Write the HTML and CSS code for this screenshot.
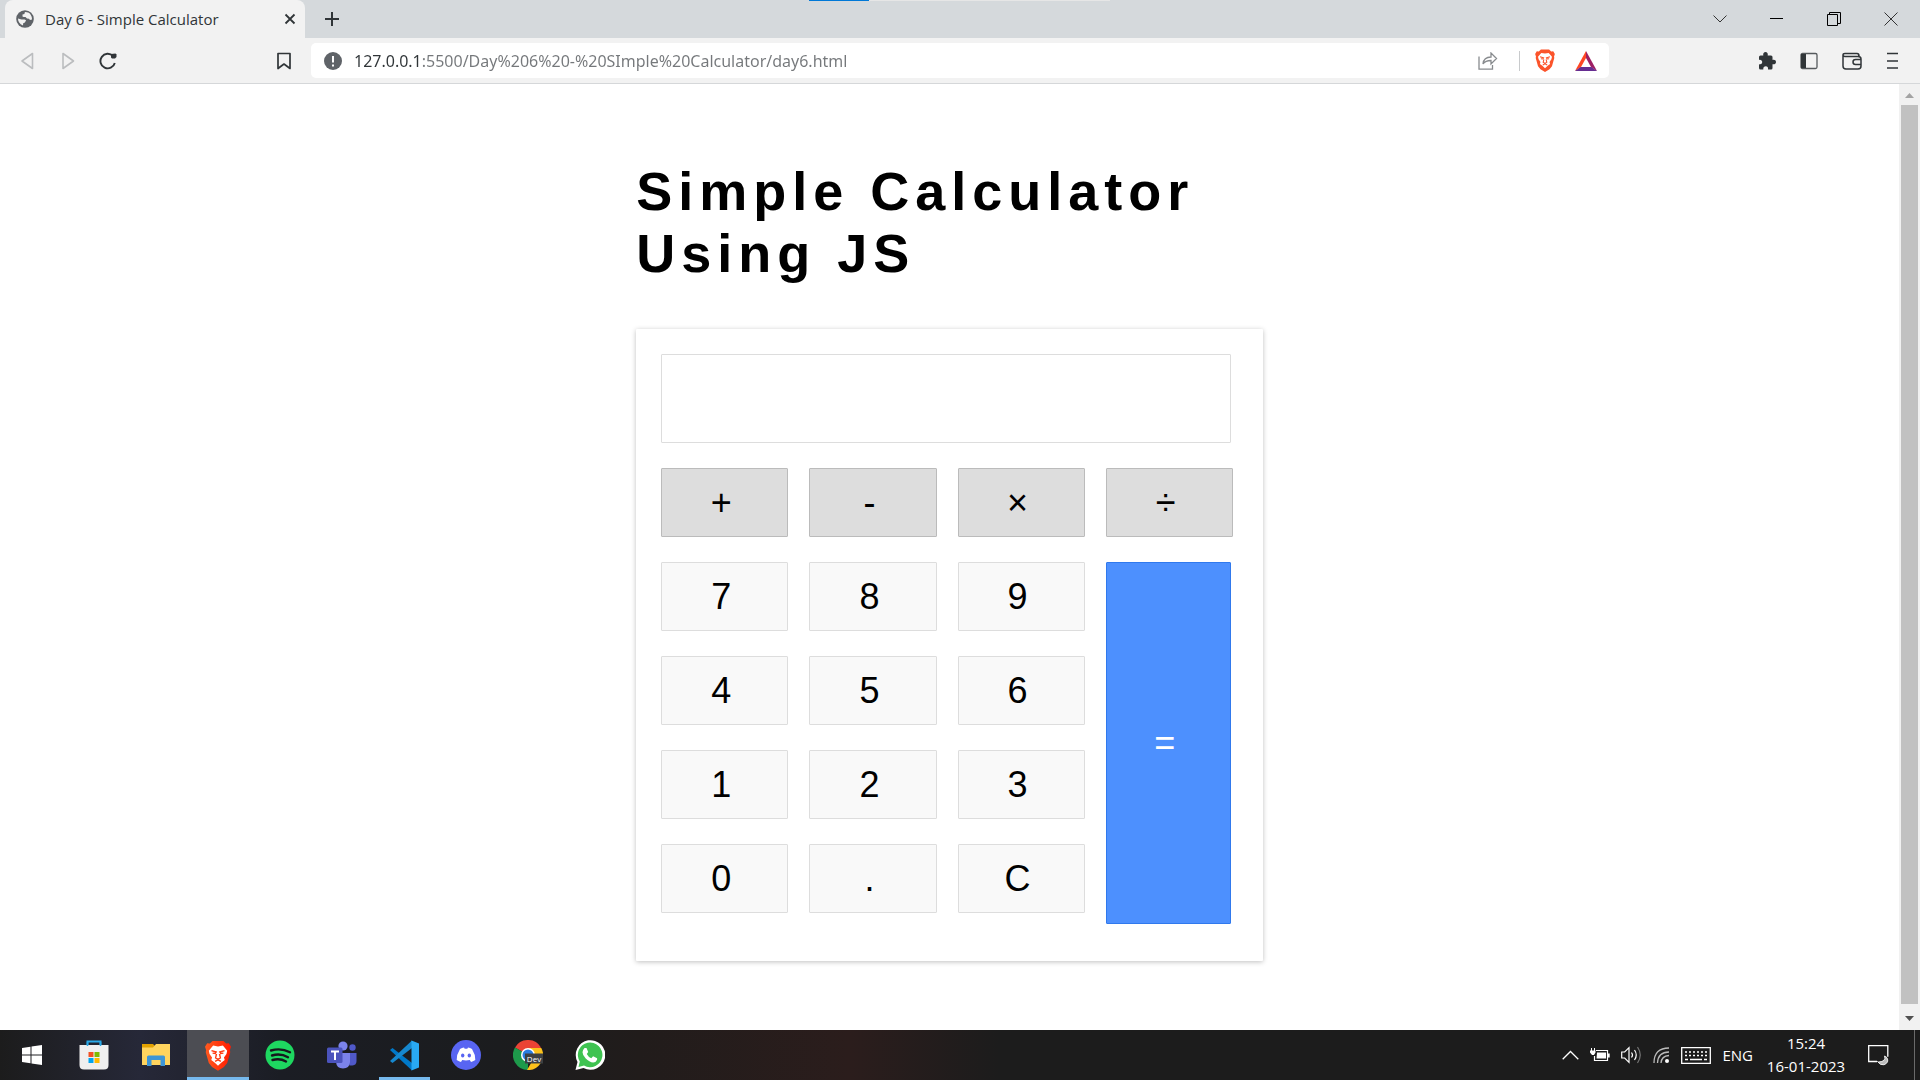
FILE: index.html
```html
<!DOCTYPE html>
<html lang="en">
<head>
<meta charset="utf-8">
<title>Day 6 - Simple Calculator</title>
<link rel="stylesheet" href="styles.css">
</head>
<body>
<svg class="defs" aria-hidden="true">
  <defs>
    <linearGradient id="braveFill" x1="0" y1="0" x2="1" y2="0"><stop offset="0" stop-color="#ff5a1f"/><stop offset="1" stop-color="#ff1a00"/></linearGradient>
    <symbol id="lion" viewBox="0 0 24 28">
      <path d="M7 .5h10l2.500 2.500 2.500-.2L24 6l-1 3 .3 2-2.800 10-3 3.500L12 28 6.500 24.500l-3-3.500L.7 11 1 9 0 6l2-3.200 2.500.2z"/>
      <path fill="#fff" d="M7.500 4.800l4.500.8 4.500-.8 4 4.700-.7 3-2.300 3.300.7 2.400-3 2.200L12 23.500l-3.200-3.100-3-2.200.7-2.400-2.300-3.300-.7-3z"/>
      <path class="lion-line" d="M6 9.500l4.300 1.300-.8 1.400-2.500-.4M18 9.500l-4.300 1.300.8 1.400 2.500-.4M10.600 12.500l-.8 3.700 2.200 1.300 2.200-1.300-.8-3.700M9.300 19.500L12 18l2.700 1.500"/>
    </symbol>
  </defs>
</svg>

<div class="tabstrip">
  <div class="tab">
    <svg class="icon18" viewBox="0 0 18 18"><circle cx="9" cy="9" r="8.800" fill="#5f6368"/><path fill="#f2f2f2" d="M9.500 2c-1 .3-1 1-1 2l-2 .6v2l1 .3 2 .1 1.500 1.500 2 .2 1 1.300 2-.4c.2-3.500-2-6.400-4-7zM2 8.500c0 3 1.500 5.500 5 6.900l.2-2.200 1.700-.6 1.200-2.300-1.600-.9H5.500z"/></svg>
    <span class="tab-title">Day 6 - Simple Calculator</span>
    <button class="plain" aria-label="Close tab"><svg width="12" height="12" viewBox="0 0 12 12"><path d="M1.500 1.500l9 9M10.500 1.500l-9 9" stroke="#303538" stroke-width="1.800"/></svg></button>
  </div>
  <button class="plain new-tab" aria-label="New tab"><svg width="16" height="16" viewBox="0 0 16 16"><path d="M8 1v14M1 8h14" stroke="#303538" stroke-width="2"/></svg></button>
  <div class="window-controls">
    <button class="plain" aria-label="Search tabs"><svg width="14" height="14" viewBox="0 0 14 14"><path d="M.5 3.500L7 10l6.500-6.500" fill="none" stroke="#333"/></svg></button>
    <button class="plain" aria-label="Minimize"><svg width="14" height="14" viewBox="0 0 14 14"><path d="M0 6.500h13" stroke="#000"/></svg></button>
    <button class="plain" aria-label="Restore"><svg width="14" height="14" viewBox="0 0 14 14"><path d="M.5 2.500h10v11H.5zM2.500 2V.5h11v11H11" fill="none" stroke="#000"/></svg></button>
    <button class="plain" aria-label="Close"><svg width="14" height="14" viewBox="0 0 14 14"><path d="M.5.5l13 13M13.500.5l-13 13" stroke="#333"/></svg></button>
  </div>
  <div class="progress"></div>
</div>

<div class="toolbar">
  <div class="nav">
    <button class="plain" aria-label="Back"><svg width="18" height="18" viewBox="0 0 18 18"><path d="M13.500 1.500v15L3 9z" fill="none" stroke="#bbbdbf" stroke-width="1.600" stroke-linejoin="round"/></svg></button>
    <button class="plain" aria-label="Forward"><svg width="18" height="18" viewBox="0 0 18 18"><path d="M4 1.500v15L14.500 9z" fill="none" stroke="#bbbdbf" stroke-width="1.600" stroke-linejoin="round"/></svg></button>
    <button class="plain" aria-label="Reload"><svg width="18" height="18" viewBox="0 0 18 18"><path d="M14 4A7.300 7.300 0 1 0 15.800 11" fill="none" stroke="#303538" stroke-width="1.900"/><path d="M12 2l4.500-.5 1 1v2.500l-1.500 1.500h-3l-1-1z" fill="#303538"/></svg></button>
    <button class="plain bookmark" aria-label="Bookmark this page"><svg width="18" height="18" viewBox="0 0 18 18"><path d="M3 1.500h12v15l-6-4.500-6 4.500z" fill="none" stroke="#303538" stroke-width="1.700" stroke-linejoin="round"/></svg></button>
  </div>
  <div class="address">
    <svg class="icon18" viewBox="0 0 18 18"><circle cx="9" cy="9" r="9" fill="#5f6368"/><path d="M9 4v6.500M9 12.500v2" stroke="#fff" stroke-width="2"/></svg>
    <input class="url" type="text" aria-label="Address" value="127.0.0.1:5500/Day%206%20-%20SImple%20Calculator/day6.html">
    <button class="plain share" aria-label="Share"><svg width="20" height="18" viewBox="0 0 20 18"><path d="M1 4.500v12.700h13.500V13M5 12c.5-5 4-7 8-7V1l5.500 5.500L13 12V8.500c-4 0-6 .5-8 3.500z" fill="none" stroke="#888b8e" stroke-width="1.300"/></svg></button>
    <span class="divider"></span>
    <button class="plain" aria-label="Brave Shields"><svg class="shield" width="20" height="23"><use href="#lion"/></svg></button>
    <button class="plain" aria-label="Brave Rewards"><svg width="22" height="20" viewBox="0 0 22 20"><path d="M11 0v7L6 16l-6 4z" fill="#ff4724"/><path d="M11 0l11 20-6-4-5-9z" fill="#9e1f63"/><path d="M0 20l5.500-4h11L22 20z" fill="#662d91"/></svg></button>
  </div>
  <div class="actions">
    <button class="plain" aria-label="Extensions"><svg width="18" height="18" viewBox="0 0 18 18"><path fill="#303538" d="M1 5a1.500 1.500 0 0 1 1.500-1.500H5.300C4.700 1.500 6 0 7.500 0s2.800 1.500 2.200 3.500H13A1.500 1.500 0 0 1 14.500 5v3C16.500 7.500 18 8.500 18 10s-1.500 2.700-3.500 2.200v3.800A1.500 1.500 0 0 1 13 17.500H10c.4-2-.7-3.200-2.200-3.200S5 15.500 5.300 17.500H2.500A1.500 1.500 0 0 1 1 16v-3.700c2 .4 3.200-.7 3.200-2.200S3 7.500 1 7.900z"/></svg></button>
    <button class="plain" aria-label="Sidebar"><svg width="18" height="18" viewBox="0 0 18 18"><rect x="1" y="1.500" width="16" height="15" rx="1.500" fill="none" stroke="#55595c" stroke-width="1.300"/><path d="M1 2h5v14H1z" fill="#303538"/></svg></button>
    <button class="plain" aria-label="Wallet"><svg width="20" height="18" viewBox="0 0 20 18"><path d="M1 3v11q0 3 3 3h12q3 0 3-3V7q0-2.500-3-2.500H3Q1 4.500 1 3t2-1.500h12q2 0 2 2.500" fill="none" stroke="#303538" stroke-width="1.500"/><path d="M19 7.500h-5.500a2.500 2.500 0 0 0 0 5H19" fill="none" stroke="#303538" stroke-width="1.500"/></svg></button>
    <button class="plain" aria-label="Menu"><svg width="12" height="18" viewBox="0 0 12 18"><path d="M1 1.500h11M1 9h11M1 16h11" stroke="#303538" stroke-width="1.500"/></svg></button>
  </div>
</div>

<div class="viewport">
  <main class="page">
    <div class="container">
      <h1>Simple Calculator Using JS</h1>
      <div class="calculator">
        <input class="display" type="text" aria-label="Result">
        <div class="keys">
          <button class="key operator">+</button>
          <button class="key operator">-</button>
          <button class="key operator">×</button>
          <button class="key operator">÷</button>
          <button class="key">7</button>
          <button class="key">8</button>
          <button class="key">9</button>
          <button class="key equals">=</button>
          <button class="key">4</button>
          <button class="key">5</button>
          <button class="key">6</button>
          <button class="key">1</button>
          <button class="key">2</button>
          <button class="key">3</button>
          <button class="key">0</button>
          <button class="key">.</button>
          <button class="key">C</button>
        </div>
      </div>
    </div>
  </main>
  <div class="scrollbar">
    <svg width="9" height="5" viewBox="0 0 9 5"><path d="M0 5l4.500-5L9 5z" fill="#a3a3a3"/></svg>
    <div class="thumb"></div>
    <svg width="9" height="5" viewBox="0 0 9 5"><path d="M0 0l4.500 5L9 0z" fill="#505050"/></svg>
  </div>
</div>

<footer class="taskbar">
  <div class="apps">
    <button class="app" aria-label="Start"><svg width="20" height="20" viewBox="0 0 20 20"><path fill="#fff" d="M0 3l8.500-1.200v7.700H0zM9.500 1.600L20 0v9.500H9.500zM0 10.500h8.500v7.700L0 17zM9.500 10.500H20V20L9.500 18.400z"/></svg></button>
    <button class="app" aria-label="Microsoft Store"><svg width="30" height="30" viewBox="0 0 30 30"><path d="M8.500 7V1.500h13V7" fill="none" stroke="#2aa9e8" stroke-width="2"/><path d="M.5 5h29v20q0 4.500-4.500 4.500H5Q.5 29.500.5 25z" fill="#efefef"/><path d="M8.500 6V2M21.500 6V2" stroke="#2aa9e8" stroke-width="1.500"/><path d="M9.500 12h5v5h-5z" fill="#f25022"/><path d="M15.500 12h5v5h-5z" fill="#7fba00"/><path d="M9.500 18h5v5h-5z" fill="#00a4ef"/><path d="M15.500 18h5v5h-5z" fill="#ffb900"/></svg></button>
    <button class="app" aria-label="File Explorer"><svg width="28" height="24" viewBox="0 0 28 24"><path d="M0 1h11l3 3-3 3H0z" fill="#e2a100"/><path d="M0 4.500h11L14 1h14v21H0z" fill="#ffd45e"/><path d="M5 23V14q0-1.500 1.500-1.500h15Q23 12.500 23 14v9h-4.500v-6h-9v6z" fill="#3d95d6"/></svg></button>
    <button class="app active" aria-label="Brave"><svg class="brave" width="26" height="31"><use href="#lion"/></svg></button>
    <button class="app" aria-label="Spotify"><svg width="30" height="30" viewBox="0 0 30 30"><circle cx="15" cy="15" r="14.500" fill="#1ed760"/><path d="M6 10.500q10-3 19 1.800M7 15.500q8.500-2.500 16 1.700M7.500 20q7.500-2 13.500 1.500" fill="none" stroke="#16181d" stroke-width="2.400" stroke-linecap="round"/></svg></button>
    <button class="app" aria-label="Microsoft Teams"><svg width="30" height="28" viewBox="0 0 30 28"><circle cx="25.500" cy="6.500" r="3.200" fill="#5059c9"/><path d="M20 12h9.500v8q0 4-4 4.500h-3z" fill="#5059c9"/><circle cx="16" cy="5" r="4.600" fill="#7b83eb"/><path d="M9 12h14v9q-.5 6.500-7 6.500T9 21z" fill="#7b83eb"/><rect y="6.500" width="15.500" height="15.500" rx="1.500" fill="#4b53bc"/><path d="M4 10.500h8M8 10.500v8.500" stroke="#fff" stroke-width="2"/></svg></button>
    <button class="app running" aria-label="Visual Studio Code"><svg width="31" height="31" viewBox="0 0 31 31"><path d="M1 10l2.500-2L23 23v7.500z" fill="#0078c8"/><path d="M1 21l2.500 2L23 8V.5z" fill="#1688cf"/><path d="M22.500.5L30 3.500v24l-7.500 3z" fill="#29a9f3"/></svg></button>
    <button class="app" aria-label="Discord"><svg width="30" height="30" viewBox="0 0 30 30"><circle cx="15" cy="15" r="15" fill="#5865f2"/><path fill="#fff" d="M9 9q2-1.300 4-1.500l.7 1.200h2.600L17 7.500q2 .2 4 1.500 3.500 5.500 3.300 11-2.500 1.700-4.300 2l-1.200-2q-3.800.8-7.600 0L10 22q-1.800-.3-4.300-2Q5.500 14.500 9 9z"/><ellipse cx="11.700" cy="15.500" rx="1.700" ry="2" fill="#5865f2"/><ellipse cx="18.300" cy="15.500" rx="1.700" ry="2" fill="#5865f2"/></svg></button>
    <button class="app" aria-label="Chrome Dev"><svg width="30" height="30" viewBox="0 0 30 30"><path d="M15 15L2 7.500a15 15 0 0 1 26 0z" fill="#ea4335"/><path d="M15 15L2 7.500A15 15 0 0 0 15 30z" fill="#1e9a4b"/><path d="M15 8h13.300A15 15 0 0 1 14 30l7-12z" fill="#fcc21b"/><circle cx="15" cy="15" r="7" fill="#fff"/><circle cx="15" cy="15" r="5.500" fill="#2a7de1"/><path d="M12 13.500h18v10H12z" fill="#3c4043"/><text x="21" y="21.500" text-anchor="middle" class="dev">Dev</text></svg></button>
    <button class="app" aria-label="WhatsApp"><svg width="30" height="30" viewBox="0 0 30 30"><path d="M.5 30l2-8A14.800 14.800 0 1 1 8.500 28z" fill="#fff"/><path d="M3.500 27l1.300-5.500A12.300 12.300 0 1 1 9 25.500z" fill="#3fc351"/><path fill="#fff" d="M9.500 8h2l1.700 4-1.400 2q1.500 3 4.500 4.300l1.800-2 4 2v1.500q-1 2.700-4 2.700-3.600-.3-7.600-4.300-3-3.500-3-6 .2-2.500 2-4.200z"/></svg></button>
  </div>
  <div class="tray">
    <svg width="17" height="10" viewBox="0 0 17 10"><path d="M.7 9.300L8.500 1.500l7.800 7.800" fill="none" stroke="#fff" stroke-width="1.300"/></svg>
    <svg width="20" height="14" viewBox="0 0 20 14"><path d="M6 2.500h11.500v10H4.500V8" fill="none" stroke="#fff" stroke-width="1.200"/><path d="M7 4.500h9v6H6.500zM18 5.500h1.700v4H18zM0 2.500h5.500v2L4 7H2L0 4.500zM1 0h1v3H1zM4 0h1v3H4z" fill="#fff"/></svg>
    <svg width="21" height="18" viewBox="0 0 21 18"><path d="M.7 6h3L8 1.700v14.600L3.700 12h-3zM10.500 6.500q2 2.500 0 5M13.500 4q3.500 5 0 10" fill="none" stroke="#fff" stroke-width="1.200"/><path d="M16.500 1q5.500 8 0 16" fill="none" stroke="#777" stroke-width="1.200"/></svg>
    <svg width="17" height="18" viewBox="0 0 17 18"><path d="M1 17Q1 2 16 2M4.500 17Q5 6 16 6M8 17q.5-7 8-7.500" fill="none" stroke="#bbb" stroke-width="1.300"/><circle cx="14" cy="15" r="2" fill="#fff"/></svg>
    <svg width="30" height="17" viewBox="0 0 30 17"><path d="M.7.700h28.600v15.600H.7z" fill="none" stroke="#fff" stroke-width="1.300"/><path d="M4 5h22M4 8.500h22" stroke="#fff" stroke-width="1.500" stroke-dasharray="2 2"/><path d="M4 12.500h3M9 12.500h12M23 12.500h3" stroke="#fff" stroke-width="1.500"/></svg>
    <span class="lang">ENG</span>
    <div class="clock"><span>15:24</span><span>16-01-2023</span></div>
    <svg class="notice" width="21" height="21" viewBox="0 0 21 21"><path d="M9 16.500H.7V.7h19.100v11" fill="none" stroke="#fff" stroke-width="1.300"/><path d="M16.500 11q2 5.500-6 6l-1-.5q2.500 4 6.500 3.300 5.500-2.300 3-7-1-1.300-2.500-1.800z" fill="#bbb" stroke="#fff" stroke-width=".8"/></svg>
  </div>
</footer>
</body>
</html>
```
FILE: styles.css
```css
* { box-sizing: border-box; }

body {
  margin: 0;
  min-height: 100vh;
  display: flex;
  flex-direction: column;
  background: #fff;
  font-family: "Open Sans", "Noto Sans", sans-serif;
}

svg { display: block; flex: none; }
.defs { position: absolute; width: 0; height: 0; }

.plain {
  display: flex;
  align-items: center;
  justify-content: center;
  padding: 0;
  border: 0;
  background: none;
}

.icon18 { width: 18px; height: 18px; }

/* Tab strip */
.tabstrip {
  position: relative;
  display: flex;
  height: 38px;
  padding-left: 5px;
  background: #d5d9dc;
}

.tab {
  display: flex;
  align-items: center;
  width: 300px;
  padding: 0 9px 0 11px;
  border-radius: 8px 8px 0 0;
  background: #f2f2f2;
}

.tab-title {
  flex: 1;
  margin-left: 11px;
  color: #303538;
  font-size: 15px;
  line-height: 18px;
  white-space: nowrap;
}

.new-tab { width: 54px; }

.window-controls {
  display: flex;
  margin-left: auto;
  padding-right: 1px;
}

.window-controls .plain { width: 57px; }

.progress {
  position: absolute;
  top: 0;
  left: 809px;
  width: 301px;
  height: 1px;
  background: linear-gradient(to right, #0078d7 60px, #e6e6e6 60px);
}

/* Toolbar */
.toolbar {
  display: flex;
  align-items: center;
  height: 46px;
  border-bottom: 1px solid #d5d7d9;
  background: #f2f2f2;
}

.nav {
  display: flex;
  gap: 22px;
  width: 311px;
  padding: 0 18px 0 19px;
}

.bookmark { margin-left: auto; }

.address {
  flex: 1;
  display: flex;
  align-items: center;
  height: 35px;
  padding: 0 12px 0 13px;
  border-radius: 5px;
  background: #fff;
}

.url {
  flex: 1;
  min-width: 0;
  height: 35px;
  margin-left: 12px;
  padding: 0;
  border: 0;
  outline: 0;
  background: linear-gradient(to right, #303538 68px, #75787b 68px);
  background-clip: text;
  -webkit-background-clip: text;
  -webkit-text-fill-color: transparent;
  font: 16px "Noto Sans", "Open Sans", sans-serif;
}

.divider {
  width: 1px;
  height: 20px;
  margin: 0 15px 0 21px;
  background: #c8cacc;
}

.address .plain + .plain { margin-left: 20px; }
.shield { fill: #fb542b; color: #fb542b; }

.lion-line {
  fill: none;
  stroke: currentColor;
  stroke-width: 1.3px;
}

.actions {
  display: flex;
  align-items: center;
  justify-content: flex-end;
  gap: 24px;
  width: 311px;
  padding-right: 22px;
}

/* Page area */
.viewport {
  flex: 1;
  display: flex;
}

.page { flex: 1; }

.container {
  width: 33%;
  margin: 0 auto;
  padding: 76px 0 69px;
  font-family: "Liberation Sans", Arial, sans-serif;
}

h1 {
  margin: 0 0 45px;
  font-size: 54px;
  line-height: 62px;
  letter-spacing: 6px;
}

.calculator {
  padding: 25px 30px 48px 25px;
  border-radius: 1px;
  background: #fff;
  box-shadow: 0 1px 5px rgba(0, 0, 0, 0.25);
}

.display {
  display: block;
  width: calc(100% - 2px);
  height: 89px;
  margin-bottom: 25px;
  padding: 0 12px;
  border: 1px solid #ddd;
  border-radius: 1px;
  font: 36px "Liberation Sans", Arial, sans-serif;
}

.keys {
  display: grid;
  grid-template-columns: repeat(4, 1fr);
  grid-auto-rows: 69px;
  gap: 25px 21px;
}

.key {
  padding: 0 7px 0 0;
  border: 1px solid #ddd;
  border-radius: 1px;
  background: #f9f9f9;
  color: #000;
  font: 36px "Liberation Sans", Arial, sans-serif;
}

.operator {
  border-color: #bbb;
  background: #ddd;
}

.equals {
  grid-column: 4;
  grid-row: 2 / span 4;
  height: 362px;
  margin-right: 2px;
  border-color: #3079ed;
  background: #4d90fe;
  color: #fff;
}

.scrollbar {
  display: flex;
  flex-direction: column;
  align-items: center;
  gap: 7px;
  width: 21px;
  padding: 9px 0;
  background: #f1f1f1;
}

.thumb {
  flex: 1;
  width: 17px;
  margin-bottom: 5px;
  background: #c1c1c1;
}

/* Taskbar */
.taskbar {
  display: flex;
  justify-content: space-between;
  height: 50px;
  background: linear-gradient(to right, #1c1c1c 0, #262838 140px, #1b1d24 280px, #1b1c1e 500px, #211c1b 640px, #2b1d1c 850px, #1c1c1c 1000px);
}

.apps {
  display: flex;
  padding-left: 1px;
}

.app {
  display: flex;
  align-items: center;
  justify-content: center;
  width: 62px;
  padding: 0;
  border: 0;
  background: none;
}

.app.active {
  background: #4c4d53;
  box-shadow: inset 0 -3px #76b9ed;
}

.app.running {
  background: linear-gradient(#76b9ed, #76b9ed) bottom / 51px 3px no-repeat;
}

.brave { fill: url(#braveFill); color: #ff3c12; }

.dev {
  fill: #fff;
  font: 8px "Open Sans", sans-serif;
}

.tray {
  display: flex;
  align-items: center;
  gap: 11px;
  margin-right: 5px;
  padding-right: 25px;
  border-right: 1px solid #6a6a6a;
  color: #fff;
  font-size: 15px;
}

.clock {
  display: flex;
  flex-direction: column;
  align-items: center;
  width: 84px;
  line-height: 23px;
}

.notice { margin-left: 9px; }
```
